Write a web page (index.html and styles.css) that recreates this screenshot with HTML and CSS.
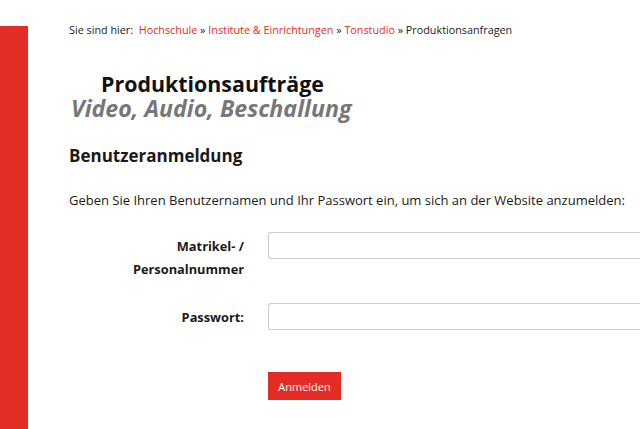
FILE: index.html
```html
<!DOCTYPE html>
<html lang="de">
<head>
<meta charset="utf-8">
<title>Benutzeranmeldung</title>
<link rel="stylesheet" href="styles.css">
</head>
<body>
<div class="page">
  <div class="sidebar"></div>
  <main class="content">
    <nav class="breadcrumb">Sie sind hier:&nbsp; <a href="#">Hochschule</a> » <a href="#">Institute &amp; Einrichtungen</a> » <a href="#">Tonstudio</a> » <span>Produktionsanfragen</span></nav>
    <header class="banner">
      <div class="banner-title">Produktionsaufträge</div>
      <div class="banner-sub">Video, Audio, Beschallung</div>
    </header>
    <h1 class="heading">Benutzeranmeldung</h1>
    <p class="intro">Geben Sie Ihren Benutzernamen und Ihr Passwort ein, um sich an der Website anzumelden:</p>
    <form class="login">
      <div class="row">
        <label class="label" for="user">Matrikel- /<br>Personalnummer</label>
        <input class="field" id="user" type="text">
      </div>
      <div class="row">
        <label class="label" for="pass">Passwort:</label>
        <input class="field" id="pass" type="password">
      </div>
      <div class="actions">
        <button class="btn" type="button">Anmelden</button>
      </div>
    </form>
  </main>
</div>
</body>
</html>
```
FILE: styles.css
```css
html, body {
  margin: 0;
  padding: 0;
  background: #fff;
}
body {
  font-family: "Open Sans", "Noto Sans", sans-serif;
  color: #1a1a1a;
  overflow: hidden;
}
.page {
  display: flex;
  height: 429px;
}
.sidebar {
  width: 28px;
  flex: none;
  margin-top: 26px;
  background: #e32d24;
}
.content {
  flex: 1;
  padding-left: 41px;
  min-width: 0;
}
.breadcrumb {
  font-size: 10.8px;
  margin-top: 22px;
  line-height: 16px;
  white-space: nowrap;
}
.breadcrumb a {
  color: #e32d24;
  text-decoration: none;
}
.banner {
  margin-top: 34px;
}
.banner-title {
  font-weight: bold;
  font-size: 21.4px;
  line-height: 24px;
  padding-left: 32px;
  color: #111;
}
.banner-sub {
  font-weight: bold;
  font-style: italic;
  font-size: 23.2px;
  line-height: 24px;
  color: #777;
  padding-left: 2px;
}
.heading {
  font-size: 17px;
  font-weight: bold;
  margin: 24px 0 0;
  line-height: 24px;
}
.intro {
  font-size: 13px;
  line-height: 18px;
  margin: 23px 0 0;
  white-space: nowrap;
}
.login {
  margin-top: 23px;
}
.row {
  display: flex;
  align-items: flex-start;
  gap: 24px;
  margin-bottom: 24px;
}
.label {
  width: 175px;
  flex: none;
  text-align: right;
  font-weight: bold;
  font-size: 12.8px;
  line-height: 23px;
  padding-top: 3px;
  margin-bottom: -2px;
}
.field {
  flex: 1;
  height: 27px;
  box-sizing: border-box;
  border: 1px solid #ccc;
  border-radius: 3px 0 0 3px;
  border-right: none;
  margin: 0;
}
.actions {
  padding-left: 199px;
  margin-top: 42px;
}
.btn {
  background: #e32d24;
  color: #fff;
  border: none;
  font-family: inherit;
  font-size: 11px;
  width: 73px;
  height: 28px;
  padding: 0;
}
```
